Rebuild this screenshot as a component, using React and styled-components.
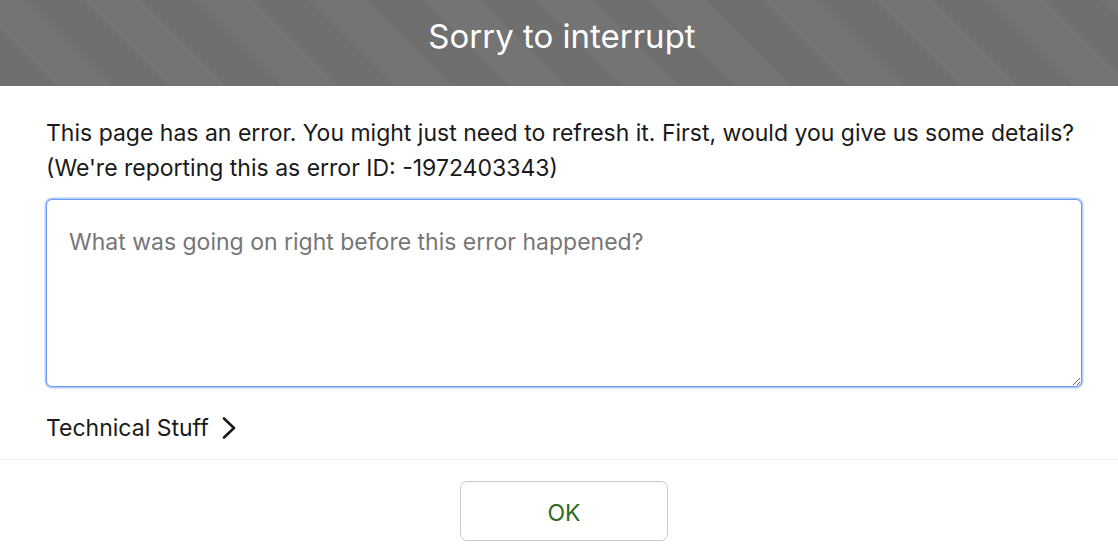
import React from "react";
import styled, { createGlobalStyle } from "styled-components";

const GlobalStyle = createGlobalStyle`
  html, body {
    margin: 0;
    padding: 0;
    background: #ffffff;
    font-family: Inter, "Noto Sans", sans-serif;
  }
  * {
    box-sizing: border-box;
  }
`;

const ErrorDialog = () => {
  return (
    <>
      <GlobalStyle />
      <Dialog>
        <Header>
          <Title>Sorry to interrupt</Title>
        </Header>
        <Body>
          <Message>
            This page has an error. You might just need to refresh it. First,
            would you give us some details?
            <br />
            (We're reporting this as error ID: -1972403343)
          </Message>
          <Details placeholder="What was going on right before this error happened?" />
          <Toggle type="button">
            Technical Stuff
            <svg width="16" height="24" viewBox="0 0 16 24" fill="none">
              <path
                d="M3 2.5l10 9.5-10 9.5"
                stroke="#1a1a1a"
                strokeWidth="2.6"
                strokeLinecap="round"
                strokeLinejoin="round"
              />
            </svg>
          </Toggle>
        </Body>
        <Footer>
          <OkButton type="button">OK</OkButton>
        </Footer>
      </Dialog>
    </>
  );
};

const Dialog = styled.div`
  width: 1118px;
  height: 554px;
  display: flex;
  flex-direction: column;
  background: #ffffff;
`;

const Header = styled.header`
  height: 86px;
  display: flex;
  align-items: center;
  justify-content: center;
  background: repeating-linear-gradient(
    45deg,
    #6f6f6f 0px,
    #6f6f6f 40px,
    #747474 40px,
    #747474 80px
  );
`;

const Title = styled.h1`
  margin: 0 0 14px 6px;
  font-size: 33px;
  font-weight: 400;
  color: #ffffff;
`;

const Body = styled.div`
  padding: 30px 36px 0 46px;
  display: flex;
  flex-direction: column;
`;

const Message = styled.p`
  margin: 0;
  font-size: 23px;
  line-height: 35px;
  color: #1a1a1a;
`;

const Details = styled.textarea`
  margin-top: 13px;
  width: 1036px;
  height: 188px;
  padding: 28px 22px 18px;
  border: 1px solid #6b9af0;
  border-radius: 6px;
  box-shadow: 0 0 0 1.5px #b4cdf8;
  font-family: inherit;
  font-size: 23px;
  color: #1a1a1a;
  resize: both;
  outline: none;

  &::placeholder {
    color: #767676;
  }
`;

const Toggle = styled.button`
  margin-top: 27px;
  padding: 0;
  border: none;
  background: none;
  display: flex;
  align-items: center;
  gap: 12px;
  font-family: inherit;
  font-size: 23px;
  color: #1a1a1a;
  cursor: pointer;
  align-self: flex-start;
`;

const Footer = styled.div`
  margin-top: 17px;
  border-top: 1px solid #f2f2f2;
  display: flex;
  justify-content: center;
  padding: 21px 0 0 10px;
`;

const OkButton = styled.button`
  width: 208px;
  height: 60px;
  padding-top: 4px;
  border: 1px solid #c9c9c9;
  border-radius: 7px;
  background: #ffffff;
  font-family: inherit;
  font-size: 23px;
  color: #2e6a1e;
  cursor: pointer;
`;

export default ErrorDialog;
